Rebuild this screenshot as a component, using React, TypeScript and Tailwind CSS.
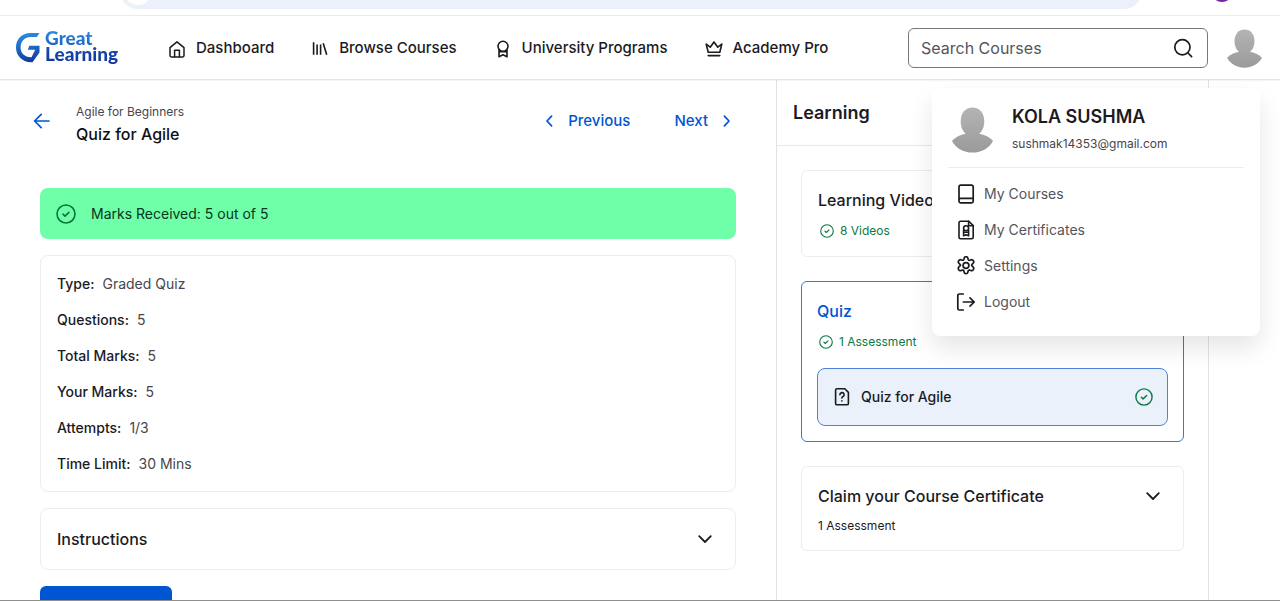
import type { ReactNode } from "react";

function Icon({ children, className = "size-5", width = 1.5 }: { children: ReactNode; className?: string; width?: number }) {
  return (
    <svg
      viewBox="0 0 20 20"
      fill="none"
      stroke="currentColor"
      strokeWidth={width}
      strokeLinecap="round"
      strokeLinejoin="round"
      aria-hidden="true"
      className={`shrink-0 ${className}`}
    >
      {children}
    </svg>
  );
}

const HomeIcon = () => (
  <Icon>
    <path d="M3 8.6 10 2.8l7 5.8v8a1.3 1.3 0 0 1-1.3 1.3H4.3A1.3 1.3 0 0 1 3 16.6z" />
    <path d="M7.6 17.8v-6.6h4.8v6.6" />
  </Icon>
);

const LibraryIcon = () => (
  <Icon width={1.6}>
    <path d="M3.6 3.2v12.6M7.1 5.4v10.4M10.6 5.4v10.4M13.2 4.2l3.5 11.6" strokeLinecap="butt" />
  </Icon>
);

const AwardIcon = () => (
  <Icon width={1.6}>
    <circle cx="10" cy="7.3" r="5" />
    <path d="M6 10.8v7l4-2 4 2v-7M6.4 12.8h7.200" />
  </Icon>
);

const CrownIcon = () => (
  <Icon width={1.6}>
    <path d="M2.2 5 4.2 13.200h11.600l2-8.200-4 3.200L10 3 6.200 8.200z" />
    <path d="M4.200 16.600h11.600" />
  </Icon>
);

const SearchIcon = () => (
  <Icon className="size-5" width={1.7}>
    <circle cx="9.4" cy="9.2" r="7.6" />
    <path d="m15 15 3.6 3.6" />
  </Icon>
);

const CheckCircle = ({ className }: { className: string }) => (
  <Icon className={className} width={1.6}>
    <circle cx="10" cy="10" r="9" />
    <path d="m7 10.2 2 1.9 3.9-3.7" />
  </Icon>
);

const ChevronDown = () => (
  <Icon width={1.8}>
    <path d="m4.2 7.2 5.8 5.8 5.8-5.8" />
  </Icon>
);

const BookIcon = () => (
  <Icon width={1.7}>
    <path d="M4.6 1.2h11a1.6 1.6 0 0 1 1.6 1.6v14.4a1.6 1.6 0 0 1-1.6 1.6h-11A1.6 1.6 0 0 1 3 17.2V2.8a1.6 1.6 0 0 1 1.6-1.6zM3 16a1.6 1.6 0 0 1 1.6-1.6h12.6" />
  </Icon>
);

const CertificateIcon = () => (
  <Icon width={1.6}>
    <path d="M4.6 1.2h8.2l4.4 4.4v11.6a1.6 1.6 0 0 1-1.6 1.6h-11A1.6 1.6 0 0 1 3 17.2V2.8a1.6 1.6 0 0 1 1.6-1.6z" />
    <path d="M12.6 1.4v4.4H17M7.6 10.2v5.600l2.500-1 2.500 1v-5.600M8 12.200h4.200" />
    <circle cx="10.1" cy="8.2" r="2.500" />
  </Icon>
);

const GearIcon = () => (
  <svg viewBox="1 1 22 22" fill="none" stroke="currentColor" strokeWidth="1.900" strokeLinecap="round" strokeLinejoin="round" aria-hidden="true" className="size-5 shrink-0">
    <path d="M12 1.8c1.3 0 1.9.7 2.1 1.8l.3 1.3c.2.6.8 1 1.5.8l1.5-.5c1.1-.4 2 0 2.700 1.100s.5 2.100-.4 2.900l-1.100 1c-.5.5-.5 1.200 0 1.700l1.200 1.100c.8.8.9 1.800.3 2.900s-1.600 1.400-2.700 1.100l-1.500-.5c-.6-.2-1.300.200-1.500.800l-.3 1.500c-.2 1.100-.9 1.700-2.100 1.700s-1.900-.6-2.100-1.700l-.3-1.500c-.2-.6-.8-1-1.500-.8l-1.500.5c-1.100.3-2.100 0-2.700-1.100s-.5-2.100.3-2.900l1.200-1.100c.5-.5.5-1.200 0-1.700l-1.100-1c-.9-.8-1-1.800-.4-2.900s1.600-1.500 2.700-1.100l1.500.5c.6.2 1.300-.2 1.500-.8l.3-1.300c.2-1.100.8-1.800 2.100-1.800z" />
    <circle cx="12" cy="11.500" r="3.200" />
  </svg>
);

const LogoutIcon = () => (
  <Icon width={1.7}>
    <path d="M7.200 2H3.400a1.600 1.600 0 0 0-1.600 1.600v12.800A1.600 1.600 0 0 0 3.400 18h3.800M7.400 10h10.800M14 5.800 18.200 10 14 14.200" />
  </Icon>
);

const QuizIcon = () => (
  <Icon width={1.6}>
    <path d="M5 1.800h7.800l3.600 3.600v11a1.400 1.400 0 0 1-1.400 1.400H5a1.400 1.400 0 0 1-1.400-1.400V3.200A1.400 1.400 0 0 1 5 1.800z" />
    <path d="M7.900 7.700a2.100 2.100 0 1 1 3 1.900c-.7.300-1 .7-1 1.500M9.900 13.900v.1" />
  </Icon>
);

function Avatar({ className, id }: { className: string; id: string }) {
  return (
    <svg viewBox="0 0 42 46" aria-hidden="true" className={className}>
      <defs>
        <linearGradient id={id} x1="0" y1="0" x2="0" y2="46" gradientUnits="userSpaceOnUse">
          <stop stopColor="#b4b4b4" />
          <stop offset="1" stopColor="#9a9a9a" />
        </linearGradient>
      </defs>
      <g fill={`url(#${id})`}>
        <path d="M21 0.500c7 0 11.800 5.500 11.800 14S27.500 29.500 21 29.500 9.200 23 9.200 14.500 14 0.500 21 0.500z" />
        <path d="M15.500 26.500c-6 1.200-11.500 3.200-15 7.500C4 41 12 45.600 21 45.600S38 41 41.500 34c-3.500-4.300-9-6.300-15-7.500z" />
      </g>
    </svg>
  );
}

function Logo() {
  return (
    <a href="#home" aria-label="Great Learning" className="flex w-[107px] items-center gap-1">
      <svg viewBox="0 0 25 30" aria-hidden="true" className="h-[30px] w-[25px] shrink-0">
        <defs>
          <linearGradient id="mark" x1="0" y1="0" x2="4" y2="30" gradientUnits="userSpaceOnUse">
            <stop stopColor="#2b8fe0" />
            <stop offset="0.450" stopColor="#1f6fcb" />
            <stop offset="1" stopColor="#123a9e" />
          </linearGradient>
        </defs>
        <path
          fill="url(#mark)"
          d="M23.500 0H14.500C5.500 0 0 6.500 0 14.500 0 22.500 6 29 15 29.300h1.500L23.500 19.500V12.800H13.300L11.800 16.800h7.400l-3.700 7.400C9 24.500 4.600 20.300 4.600 14.500c0-6 4-10.400 10-10.400h6.200z"
        />
      </svg>
      <span className="font-[Lato,sans-serif] text-[19px] leading-4 font-black">
        <span className="block bg-linear-to-b from-[#2b8fe0] to-[#1c62c4] bg-clip-text text-transparent">Great</span>
        <span className="block bg-linear-to-b from-[#1b50b4] to-[#10309a] bg-clip-text pb-1 text-transparent">Learning</span>
      </span>
    </a>
  );
}

const NAV = [
  { label: "Dashboard", icon: <HomeIcon /> },
  { label: "Browse Courses", icon: <LibraryIcon /> },
  { label: "University Programs", icon: <AwardIcon /> },
  { label: "Academy Pro", icon: <CrownIcon /> },
];

const MENU = [
  { label: "My Courses", icon: <BookIcon /> },
  { label: "My Certificates", icon: <CertificateIcon /> },
  { label: "Settings", icon: <GearIcon /> },
  { label: "Logout", icon: <LogoutIcon /> },
];

const DETAILS = [
  ["Type:", "Graded Quiz"],
  ["Questions:", "5"],
  ["Total Marks:", "5"],
  ["Your Marks:", "5"],
  ["Attempts:", "1/3"],
  ["Time Limit:", "30 Mins"],
];

function BrowserEdge() {
  return (
    <div className="flex h-4 shrink-0 items-start overflow-hidden border-b border-[#ebebeb] pr-[47px] pl-[120px]">
      <div className="-mt-[27px] flex h-9 flex-1 items-center rounded-full bg-[#ebf0fa] pl-1">
        <span className="size-7 rounded-full bg-white" />
      </div>
      <span className="-mt-5 ml-[69px] size-[22px] rounded-full bg-[#7b1fa2]" />
    </div>
  );
}

function ProfileMenu() {
  return (
    <div className="absolute top-[72px] right-5 z-10 w-[328px] rounded-lg bg-white px-4 pt-[19px] pb-4 shadow-[0_12px_24px_rgba(0,0,0,0.10)]">
      <div className="flex gap-[18px] border-b border-[#ededed] pb-[13px] pl-[3px]">
        <Avatar id="menu-avatar" className="h-[46px] w-[43px]" />
        <div>
          <p className="text-lg leading-5 font-semibold text-[#1b1b1f]">KOLA SUSHMA</p>
          <p className="mt-[7px] text-xs leading-5 text-[#46464c]">sushmak14353@gmail.com</p>
        </div>
      </div>
      <ul className="pt-2">
        {MENU.map((m) => (
          <li key={m.label}>
            <a href="#menu" className="flex h-9 items-center gap-2 pl-2 text-sm text-[#55555b]">
              <span className="text-[#1b1b1f]">{m.icon}</span>
              {m.label}
            </a>
          </li>
        ))}
      </ul>
    </div>
  );
}

function Header() {
  return (
    <header className="relative flex h-16 shrink-0 items-center border-b border-[#e4e4e4] pr-[17px] pl-4 shadow-[0_1px_1px_rgba(0,0,0,0.04)]">
      <Logo />
      <nav className="ml-11 flex gap-9 pt-[2px]">
        {NAV.map((n) => (
          <a key={n.label} href="#nav" className="flex items-center gap-[9px] text-[15px] font-medium whitespace-nowrap">
            {n.icon}
            {n.label}
          </a>
        ))}
      </nav>
      <form className="ml-auto flex h-10 w-[300px] items-center rounded-md border border-[#77777b] pr-[14px] pl-3">
        <input
          type="search"
          aria-label="Search Courses"
          placeholder="Search Courses"
          className="min-w-0 flex-1 bg-transparent text-base outline-none placeholder:text-[#55555b]"
        />
        <button type="button" aria-label="Search">
          <SearchIcon />
        </button>
      </form>
      <button type="button" aria-label="Profile" className="ml-[18px] pt-[2px]">
        <Avatar id="header-avatar" className="h-[39px] w-[37px]" />
      </button>
      <ProfileMenu />
    </header>
  );
}

function QuizPanel() {
  return (
    <main className="min-w-0 flex-1 px-10">
      <div className="-ml-2 flex h-[108px] items-start pt-[21px]">
        <a href="#back" aria-label="Back" className="mt-[10px] text-[#0056d2]">
          <Icon width={1.7}>
            <path d="M17 10H2.600M9.200 3.400 2.600 10l6.600 6.600" />
          </Icon>
        </a>
        <div className="ml-6">
          <p className="text-xs leading-[22px] text-[#46464c]">Agile for Beginners</p>
          <h1 className="text-base leading-[22px] font-medium text-[#101014]">Quiz for Agile</h1>
        </div>
        <div className="mt-[10px] ml-auto flex gap-11 text-[15px] leading-5 font-medium text-[#0056d2]">
          <a href="#previous" className="flex items-center gap-2">
            <Icon width={1.700}>
              <path d="M11.600 5.200 7 10l4.600 4.800" />
            </Icon>
            Previous
          </a>
          <a href="#next" className="flex items-center gap-2">
            Next
            <Icon width={1.700}>
              <path d="M8.400 5.200 13 10l-4.600 4.800" />
            </Icon>
          </a>
        </div>
      </div>

      <div className="flex flex-col gap-4">
        <div className="flex h-[51px] items-center gap-[15px] rounded-lg bg-[#70ffa9] px-4 text-sm text-[#08361c]">
          <CheckCircle className="size-5 text-[#07753a]" />
          Marks Received: 5 out of 5
        </div>

        <dl className="rounded-lg border border-[#ededed] px-4 pt-[10px] pb-[9px]">
          {DETAILS.map(([term, value]) => (
            <div key={term} className="flex h-9 items-center gap-2 text-sm">
              <dt className="font-medium">{term}</dt>
              <dd className="text-[#46464c]">{value}</dd>
            </div>
          ))}
        </dl>

        <button type="button" className="flex h-[62px] items-center justify-between rounded-lg border border-[#ededed] pr-5 pl-4 text-left text-base font-medium">
          Instructions
          <ChevronDown />
        </button>

        <button type="button" aria-label="Start quiz" className="h-12 w-[132px] rounded-md bg-[#0056d2]" />
      </div>
    </main>
  );
}

function Outline() {
  return (
    <aside className="mr-[71px] w-[433px] shrink-0 border-x border-[#e2e2e4]">
      <h2 className="border-b border-[#e8e8ea] px-4 pt-[21px] pb-5 text-lg leading-6 font-semibold">Learning</h2>
      <div className="flex flex-col gap-6 p-6">
        <section className="rounded-md border border-[#ededed] px-4 pt-[15px] pb-[13px]">
          <h3 className="text-base leading-7 font-medium">Learning Videos</h3>
          <p className="mt-[5px] flex items-center gap-[6px] pl-[2px] text-xs leading-6 text-[#0d7a41]">
            <CheckCircle className="size-[14px]" />
            8 Videos
          </p>
        </section>

        <section className="rounded-md border border-[#3f75cf] px-[15px] pt-[15px] pb-[15px]">
          <h3 className="text-base leading-7 font-medium text-[#0056d2]">Quiz</h3>
          <p className="mt-[5px] flex items-center gap-[6px] pl-[2px] text-xs leading-6 text-[#0d7a41]">
            <CheckCircle className="size-[14px]" />
            1 Assessment
          </p>
          <a href="#quiz" className="mt-[14px] flex h-[58px] items-center gap-[9px] rounded-lg border border-[#4d83dc] bg-[#eaf1fb] px-[14px] text-sm font-medium">
            <QuizIcon />
            Quiz for Agile
            <CheckCircle className="ml-auto size-[18px] text-[#0d7a41]" />
          </a>
        </section>

        <section className="rounded-md border border-[#ededed] px-4 pt-[15px] pb-3">
          <button type="button" className="flex w-full items-center justify-between pr-1 text-base leading-7 font-medium">
            Claim your Course Certificate
            <ChevronDown />
          </button>
          <p className="mt-1 text-xs leading-6">1 Assessment</p>
        </section>
      </div>
    </aside>
  );
}

export default function App() {
  return (
    <div className="flex h-screen flex-col overflow-hidden border-b border-[#8f8f8f] bg-white font-[Inter,sans-serif] text-[#1b1b1f]">
      <BrowserEdge />
      <Header />
      <div className="flex min-h-0 flex-1 overflow-hidden">
        <QuizPanel />
        <Outline />
      </div>
    </div>
  );
}
